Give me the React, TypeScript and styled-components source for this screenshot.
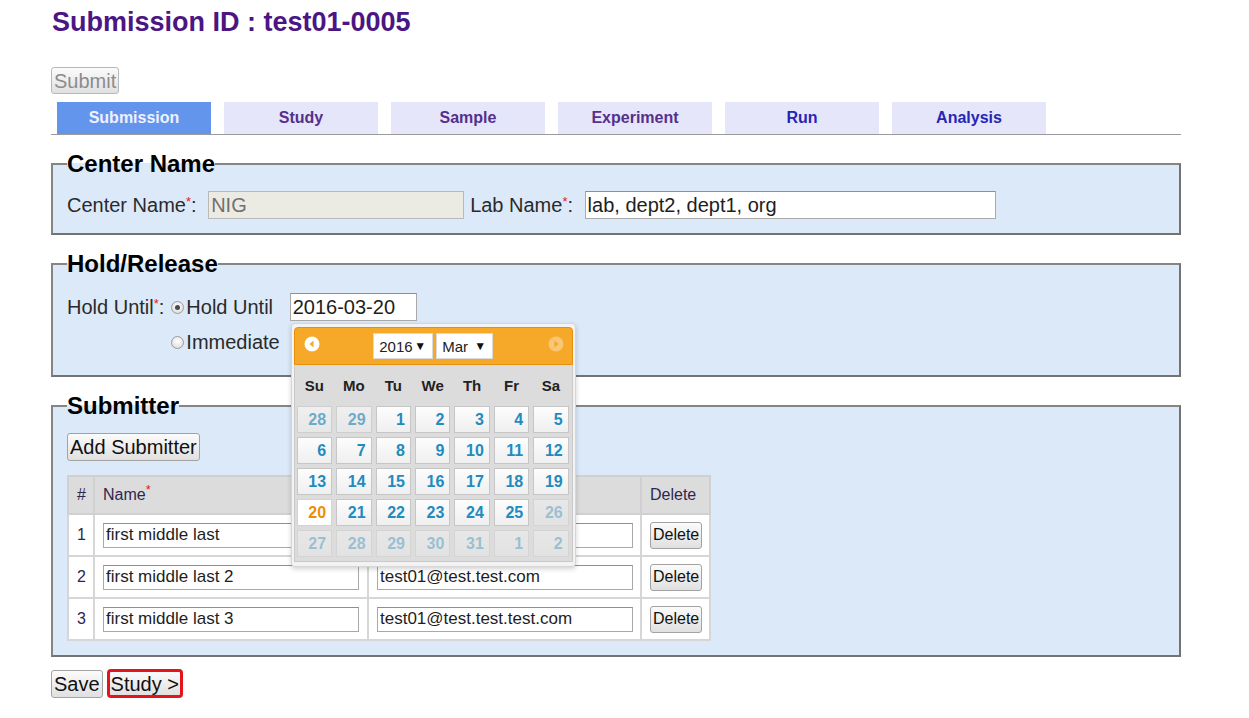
import React from "react";
import styled, { createGlobalStyle } from "styled-components";

const Global = createGlobalStyle`
  html, body { margin: 0; padding: 0; background: #ffffff; }
  body { font-family: "Liberation Sans", Arial, sans-serif; color: #222222; }
  * { box-sizing: border-box; }
`;

const Page = styled.div`
  width: 1181px;
  padding: 7px 0 20px 51px;
`;

const Title = styled.h1`
  margin: 0;
  padding-left: 1px;
  font-size: 27px;
  line-height: 31px;
  font-weight: bold;
  color: #4b1683;
`;

const Toolbar = styled.div`
  margin-top: 29px;
  display: flex;
`;

const Btn = styled.button<{ $fs?: number; $h?: number }>`
  font-family: "Liberation Sans", Arial, sans-serif;
  font-size: ${(p) => p.$fs ?? 20}px;
  height: ${(p) => p.$h ?? 28}px;
  line-height: 1;
  padding: 0 2px;
  margin: 0;
  color: #111111;
  background: linear-gradient(#fbfbfb, #e0e0e0);
  border: 1px solid #a3a3a3;
  border-radius: 3px;
  cursor: pointer;
  &:disabled {
    color: #8c8c8c;
    border-color: #b8b8b8;
    cursor: default;
  }
`;

const NextBtn = styled(Btn)`
  border: 3px solid #e3141c;
  border-radius: 4px;
  height: 29px;
  margin-left: 4px;
  padding: 0 1px;
`;

const TabBar = styled.nav`
  margin-top: 8px;
  display: flex;
  gap: 13px;
  padding-left: 6px;
  border-bottom: 1px solid #9a9a9a;
`;

const Tab = styled.a<{ $active?: boolean; $visited?: boolean }>`
  width: 154px;
  height: 32px;
  display: flex;
  align-items: center;
  justify-content: center;
  text-decoration: none;
  font-size: 16px;
  font-weight: bold;
  background: ${(p) => (p.$active ? "#6495ed" : "#e6e6fa")};
  color: ${(p) => (p.$active ? "#eef2ff" : p.$visited ? "#55308c" : "#2626b4")};
`;

const Fieldset = styled.fieldset<{ $pb?: number }>`
  margin: 15px 0 0 0;
  padding: 13px 14px ${(p) => p.$pb ?? 14}px 14px;
  border: 2px solid #858585;
  border-right-color: #737373;
  border-bottom-color: #737373;
  background: #dbe9f9;
  min-width: 0;
`;

const Legend = styled.legend`
  padding: 0;
  font-size: 24px;
  line-height: 28px;
  font-weight: bold;
  color: #000000;
`;

const Row = styled.div`
  display: flex;
  align-items: center;
  gap: 6px;
  font-size: 20px;
  color: #2a2a2a;
`;

const Label = styled.span`
  white-space: nowrap;
`;

const Req = styled.sup`
  color: #e31b1b;
  font-size: 13px;
  line-height: 0;
  vertical-align: 6px;
`;

const TextInput = styled.input<{ $w: number; $h: number; $fs: number }>`
  width: ${(p) => p.$w}px;
  height: ${(p) => p.$h}px;
  margin: 0;
  padding: 0 2px;
  font-family: "Liberation Sans", Arial, sans-serif;
  font-size: ${(p) => p.$fs}px;
  color: #1e1e1e;
  background: #ffffff;
  border: 1px solid #a9a9a9;
  border-top-color: #8f8f8f;
  &:disabled {
    background: #ebebe4;
    color: #707070;
    border-color: #b9b9b9;
  }
`;

const HoldGrid = styled.div`
  display: grid;
  grid-template-columns: auto auto auto 1fr;
  grid-template-rows: 32px 30px;
  row-gap: 4px;
  align-items: center;
  font-size: 20px;
  color: #2a2a2a;
  padding-bottom: 4px;
`;

const HoldLabel = styled.span`
  margin-right: 7px;
  white-space: nowrap;
`;

const Option = styled.label<{ $row: number }>`
  grid-column: 2;
  grid-row: ${(p) => p.$row};
  display: flex;
  align-items: center;
  white-space: nowrap;
`;

const Radio = styled.input`
  appearance: none;
  -webkit-appearance: none;
  width: 13px;
  height: 13px;
  margin: 0 2px 0 0;
  border-radius: 50%;
  border: 1px solid #9b9b9b;
  background: radial-gradient(circle at 50% 40%, #ffffff, #d6d6d6);
  display: grid;
  place-items: center;
  &:checked::after {
    content: "";
    width: 5px;
    height: 5px;
    border-radius: 50%;
    background: #4a4a4a;
  }
`;

const DateField = styled.div`
  grid-column: 3;
  grid-row: 1;
  position: relative;
  margin-left: 10px;
  display: flex;
`;

const Popup = styled.div`
  position: absolute;
  left: 1px;
  top: 30px;
  width: 285px;
  padding: 3px 2px 4px 2px;
  background: #f3f3f3;
  border: 1px solid #d6d6d6;
  border-radius: 4px;
  box-shadow: 0 2px 5px rgba(0, 0, 0, 0.18);
  z-index: 10;
  font-family: "Liberation Sans", Arial, sans-serif;
`;

const CalHeader = styled.div`
  position: relative;
  height: 38px;
  display: flex;
  align-items: center;
  justify-content: center;
  gap: 3px;
  background: #f6a828;
  border: 1px solid #e78f08;
  border-radius: 4px 4px 0 0;
`;

const NavIcon = styled.span<{ $side: "left" | "right"; $disabled?: boolean }>`
  position: absolute;
  top: 8px;
  ${(p) => (p.$side === "left" ? "left: 9px;" : "right: 8px;")}
  width: 16px;
  height: 16px;
  display: flex;
  opacity: ${(p) => (p.$disabled ? 0.35 : 1)};
`;

const SelectBox = styled.span<{ $w: number }>`
  width: ${(p) => p.$w}px;
  height: 26px;
  display: flex;
  align-items: center;
  justify-content: space-between;
  padding: 0 6px 0 5px;
  background: #ffffff;
  border: 1px solid #d9d9d9;
  font-size: 15px;
  color: #222222;
`;

const Caret = styled.span`
  font-size: 12px;
  color: #111111;
`;

const CalBody = styled.div`
  background: #dcdcdc;
  border: 1px solid #c9c9c9;
  border-top: none;
  padding: 0 3px 4px 2px;
`;

const DayNames = styled.div`
  display: grid;
  grid-template-columns: repeat(7, 1fr);
  column-gap: 4px;
  height: 38px;
  align-items: center;
  padding-top: 2px;
`;

const DayName = styled.span`
  text-align: center;
  font-size: 15px;
  font-weight: bold;
  color: #222222;
`;

const DayGrid = styled.div`
  display: grid;
  grid-template-columns: repeat(7, 1fr);
  column-gap: 4px;
  row-gap: 4px;
  padding-top: 3px;
`;

type DayKind = "normal" | "other" | "disabled" | "active";

const Day = styled.span<{ $kind: DayKind }>`
  height: 27px;
  line-height: 25px;
  padding-right: 5px;
  text-align: right;
  font-size: 16px;
  font-weight: bold;
  border: 1px solid ${(p) => (p.$kind === "active" ? "#fbd850" : "#c6c6c6")};
  background: ${(p) => (p.$kind === "active" ? "#ffffff" : "linear-gradient(#fdfdfd, #efefef)")};
  color: ${(p) => (p.$kind === "active" ? "#eb8f00" : "#1f8bc0")};
  opacity: ${(p) => (p.$kind === "other" ? 0.6 : p.$kind === "disabled" ? 0.35 : 1)};
`;

const Table = styled.table`
  margin-top: 14px;
  width: 642px;
  table-layout: fixed;
  border-collapse: collapse;
  background: #ffffff;
  font-size: 16px;
  color: #2e2650;
`;

const Th = styled.th<{ $w: number; $center?: boolean }>`
  width: ${(p) => p.$w}px;
  height: 38px;
  padding: 0 8px;
  background: #dcdcdc;
  border: 2px solid #d0d0d0;
  font-weight: normal;
  text-align: ${(p) => (p.$center ? "center" : "left")};
`;

const Td = styled.td<{ $center?: boolean }>`
  height: 42px;
  padding: 0 8px;
  border: 2px solid #d6d6d6;
  text-align: ${(p) => (p.$center ? "center" : "left")};
  vertical-align: middle;
`;

const Actions = styled.div`
  margin-top: 12px;
  display: flex;
  align-items: center;
`;

function Arrow({ dir }: { dir: "left" | "right" }) {
  return (
    <svg width="16" height="16" viewBox="0 0 16 16">
      <circle cx="8" cy="8" r="7.5" fill="#ffffff" />
      {dir === "left" ? (
        <polygon points="9.5,4.5 9.5,11.5 5.5,8" fill="#f6a828" />
      ) : (
        <polygon points="6.5,4.5 6.5,11.5 10.5,8" fill="#f6a828" />
      )}
    </svg>
  );
}

const weeks: [number, DayKind][][] = [
  [[28, "other"], [29, "other"], [1, "normal"], [2, "normal"], [3, "normal"], [4, "normal"], [5, "normal"]],
  [[6, "normal"], [7, "normal"], [8, "normal"], [9, "normal"], [10, "normal"], [11, "normal"], [12, "normal"]],
  [[13, "normal"], [14, "normal"], [15, "normal"], [16, "normal"], [17, "normal"], [18, "normal"], [19, "normal"]],
  [[20, "active"], [21, "normal"], [22, "normal"], [23, "normal"], [24, "normal"], [25, "normal"], [26, "disabled"]],
  [[27, "disabled"], [28, "disabled"], [29, "disabled"], [30, "disabled"], [31, "disabled"], [1, "disabled"], [2, "disabled"]],
];

const submitters = [
  { name: "first middle last", email: "test01@test.com" },
  { name: "first middle last 2", email: "test01@test.test.com" },
  { name: "first middle last 3", email: "test01@test.test.test.com" },
];

const tabs = [
  { label: "Submission", active: true, visited: false },
  { label: "Study", active: false, visited: true },
  { label: "Sample", active: false, visited: true },
  { label: "Experiment", active: false, visited: true },
  { label: "Run", active: false, visited: false },
  { label: "Analysis", active: false, visited: false },
];

function DatePicker() {
  return (
    <Popup>
      <CalHeader>
        <NavIcon $side="left">
          <Arrow dir="left" />
        </NavIcon>
        <SelectBox $w={60}>
          2016 <Caret>▼</Caret>
        </SelectBox>
        <SelectBox $w={57}>
          Mar <Caret>▼</Caret>
        </SelectBox>
        <NavIcon $side="right" $disabled>
          <Arrow dir="right" />
        </NavIcon>
      </CalHeader>
      <CalBody>
        <DayNames>
          {["Su", "Mo", "Tu", "We", "Th", "Fr", "Sa"].map((d) => (
            <DayName key={d}>{d}</DayName>
          ))}
        </DayNames>
        <DayGrid>
          {weeks.flat().map(([n, k], i) => (
            <Day key={i} $kind={k}>
              {n}
            </Day>
          ))}
        </DayGrid>
      </CalBody>
    </Popup>
  );
}

export default function App() {
  return (
    <>
      <Global />
      <Page>
        <Title>Submission ID : test01-0005</Title>
        <Toolbar>
          <Btn disabled $h={27}>
            Submit
          </Btn>
        </Toolbar>
        <TabBar>
          {tabs.map((t) => (
            <Tab key={t.label} href="#" $active={t.active} $visited={t.visited}>
              {t.label}
            </Tab>
          ))}
        </TabBar>

        <Fieldset>
          <Legend>Center Name</Legend>
          <Row>
            <Label>
              Center Name<Req>*</Req>:&nbsp;
            </Label>
            <TextInput $w={256} $h={28} $fs={20} value="NIG" disabled readOnly />
            <Label>
              Lab Name<Req>*</Req>:&nbsp;
            </Label>
            <TextInput $w={411} $h={28} $fs={20} defaultValue="lab, dept2, dept1, org" />
          </Row>
        </Fieldset>

        <Fieldset>
          <Legend>Hold/Release</Legend>
          <HoldGrid>
            <HoldLabel>
              Hold Until<Req>*</Req>:
            </HoldLabel>
            <Option $row={1}>
              <Radio type="radio" name="hold" defaultChecked />
              Hold Until
            </Option>
            <DateField>
              <TextInput $w={127} $h={28} $fs={20} defaultValue="2016-03-20" />
              <DatePicker />
            </DateField>
            <Option $row={2}>
              <Radio type="radio" name="hold" />
              Immediate
            </Option>
          </HoldGrid>
        </Fieldset>

        <Fieldset>
          <Legend>Submitter</Legend>
          <Btn $h={28}>Add Submitter</Btn>
          <Table>
            <thead>
              <tr>
                <Th $w={26} $center>
                  #
                </Th>
                <Th $w={274}>
                  Name<Req>*</Req>
                </Th>
                <Th $w={273}>
                  Email<Req>*</Req>
                </Th>
                <Th $w={69}>Delete</Th>
              </tr>
            </thead>
            <tbody>
              {submitters.map((s, i) => (
                <tr key={i}>
                  <Td $center>{i + 1}</Td>
                  <Td>
                    <TextInput $w={256} $h={25} $fs={17} defaultValue={s.name} />
                  </Td>
                  <Td>
                    <TextInput $w={256} $h={25} $fs={17} defaultValue={s.email} />
                  </Td>
                  <Td>
                    <Btn $fs={16} $h={27}>
                      Delete
                    </Btn>
                  </Td>
                </tr>
              ))}
            </tbody>
          </Table>
        </Fieldset>

        <Actions>
          <Btn $h={28}>Save</Btn>
          <NextBtn>Study &gt;</NextBtn>
        </Actions>
      </Page>
    </>
  );
}
